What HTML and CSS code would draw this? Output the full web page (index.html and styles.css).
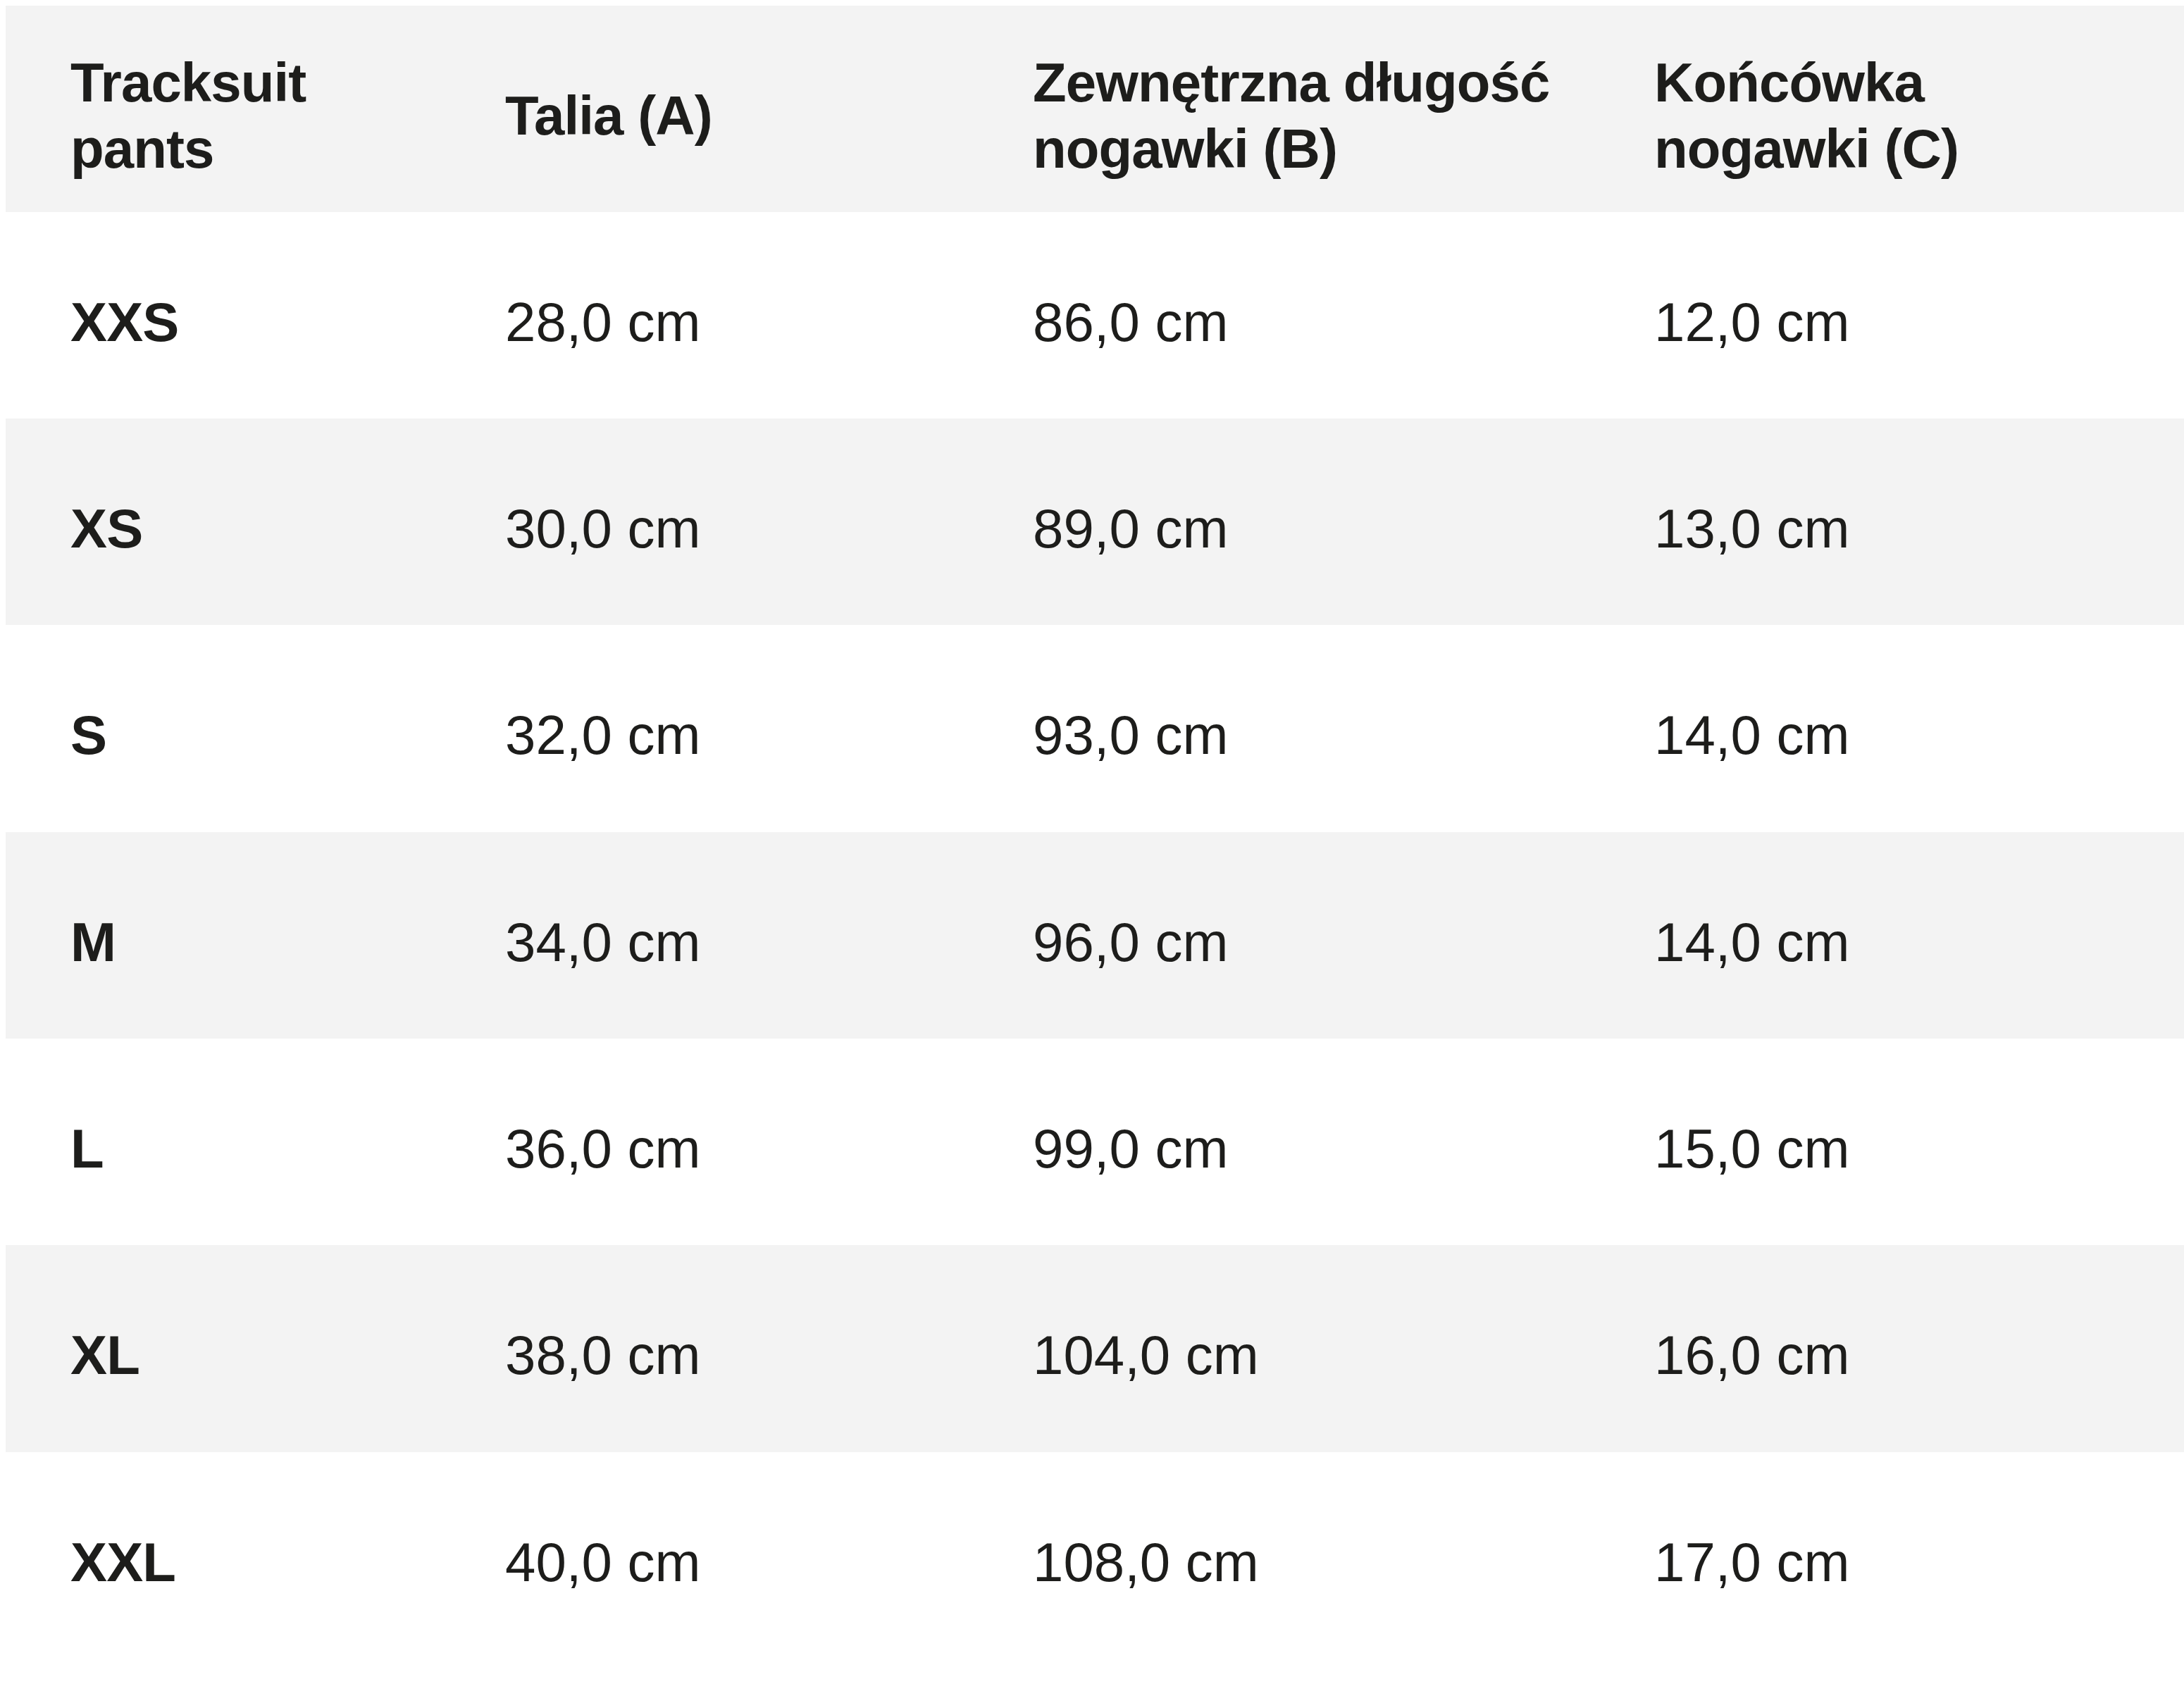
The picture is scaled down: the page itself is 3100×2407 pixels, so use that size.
FILE: index.html
```html
<!DOCTYPE html>
<html lang="pl">
<head>
<meta charset="utf-8">
<title>Tracksuit pants – tabela rozmiarów</title>
<link rel="stylesheet" href="styles.css">
</head>
<body>
<table class="size-table">
  <colgroup>
    <col class="c1"><col class="c2"><col class="c3"><col class="c4">
  </colgroup>
  <thead>
    <tr class="head-row">
      <th>Tracksuit<br>pants</th>
      <th>Talia (A)</th>
      <th>Zewnętrzna długość<br>nogawki (B)</th>
      <th>Końcówka<br>nogawki (C)</th>
    </tr>
  </thead>
  <tbody>
    <tr><th>XXS</th><td>28,0 cm</td><td>86,0 cm</td><td>12,0 cm</td></tr>
    <tr class="alt"><th>XS</th><td>30,0 cm</td><td>89,0 cm</td><td>13,0 cm</td></tr>
    <tr><th>S</th><td>32,0 cm</td><td>93,0 cm</td><td>14,0 cm</td></tr>
    <tr class="alt"><th>M</th><td>34,0 cm</td><td>96,0 cm</td><td>14,0 cm</td></tr>
    <tr><th>L</th><td>36,0 cm</td><td>99,0 cm</td><td>15,0 cm</td></tr>
    <tr class="alt"><th>XL</th><td>38,0 cm</td><td>104,0 cm</td><td>16,0 cm</td></tr>
    <tr><th>XXL</th><td>40,0 cm</td><td>108,0 cm</td><td>17,0 cm</td></tr>
  </tbody>
</table>
</body>
</html>
```
FILE: styles.css
```css
html, body {
  margin: 0;
  padding: 0;
  background: #ffffff;
}
body {
  padding: 8px 0 0 8px;
  font-family: "Liberation Sans", Arial, sans-serif;
  color: #1d1d1b;
}
.size-table {
  border-collapse: collapse;
  border-spacing: 0;
  table-layout: fixed;
  width: 3092px;
  font-size: 78px;
  line-height: 94px;
}
.c1 { width: 617px; }
.c2 { width: 749px; }
.c3 { width: 882px; }
.c4 { width: 844px; }
.size-table th,
.size-table td {
  text-align: left;
  vertical-align: middle;
  padding: 109px 24px 90.35px 92px;
  white-space: nowrap;
}
.size-table th {
  font-weight: 700;
  letter-spacing: -0.9px;
}
.size-table td {
  font-weight: 400;
}
.head-row {
  background: #f3f3f3;
}
.head-row th {
  padding-top: 62px;
  padding-bottom: 42.7px;
}
.alt {
  background: #f3f3f3;
}
```
